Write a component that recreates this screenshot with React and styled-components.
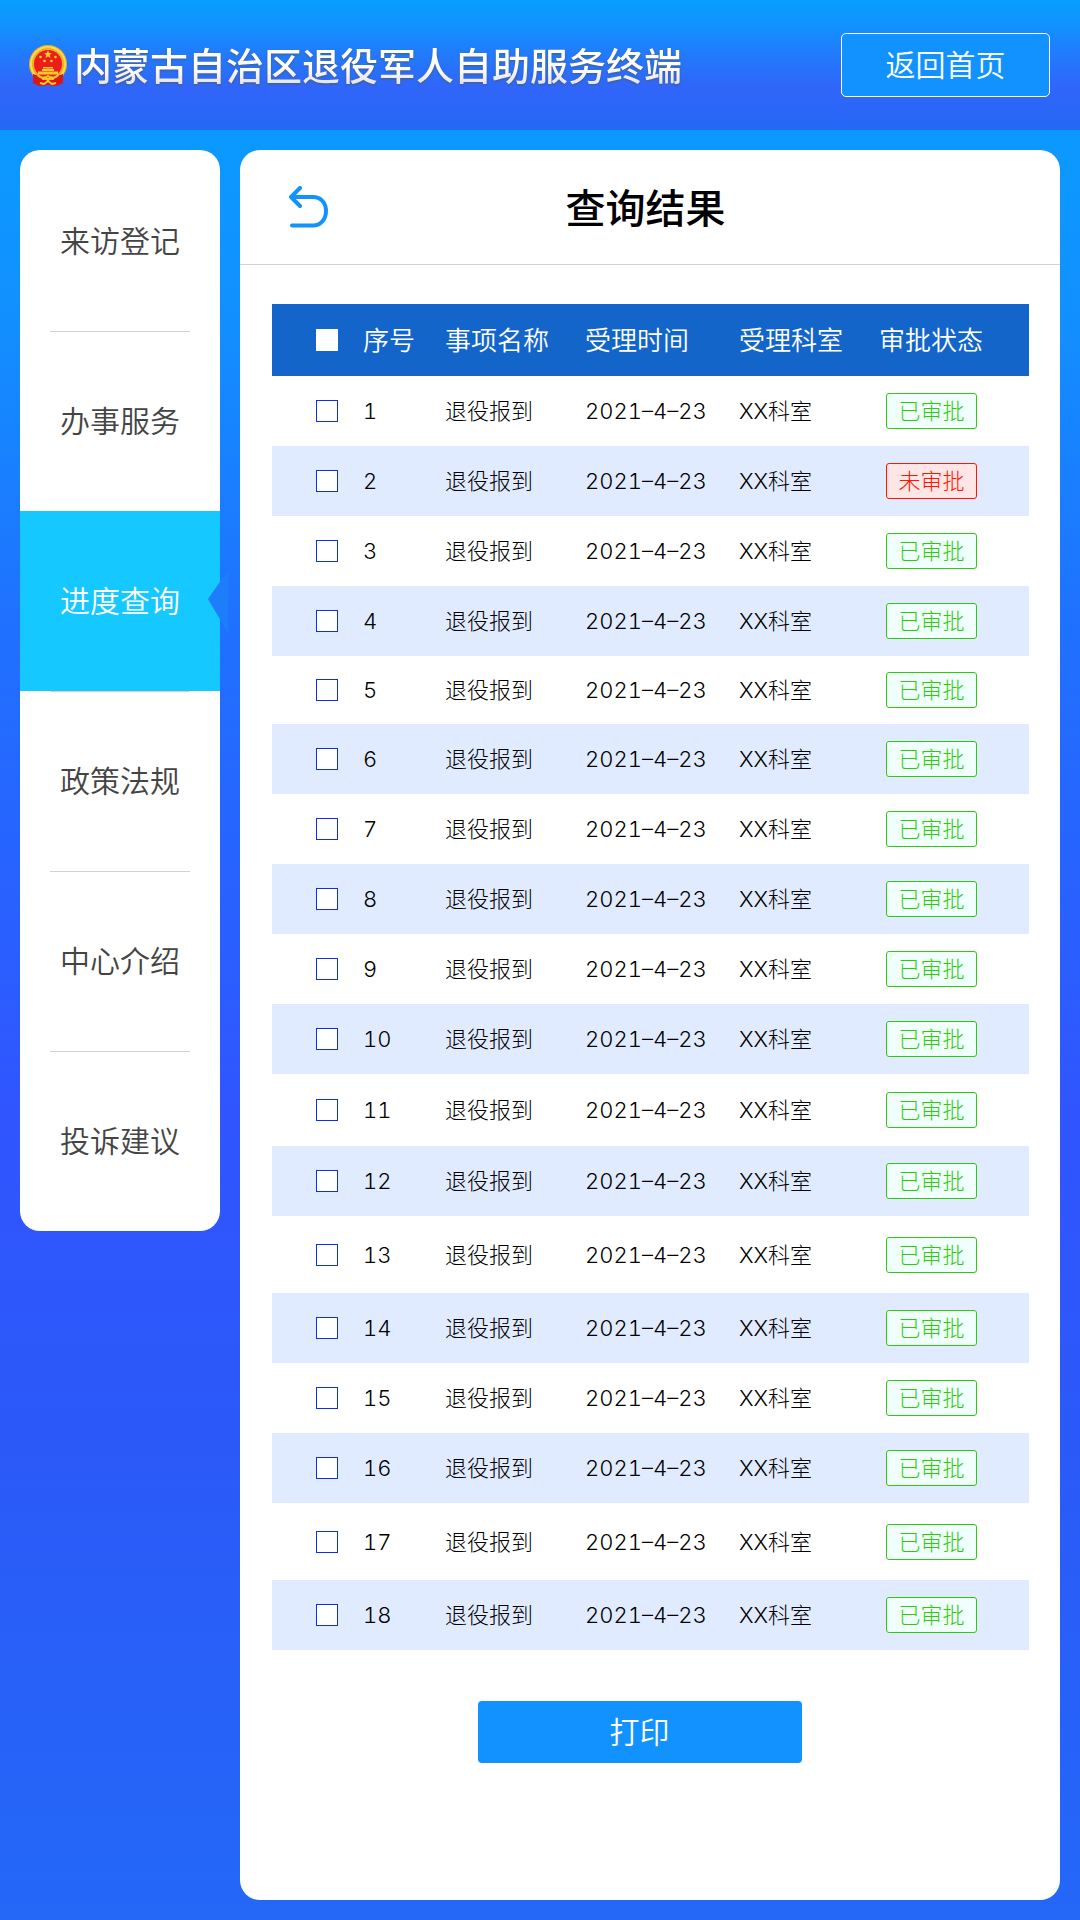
import React, { useState } from "react";
import styled, { createGlobalStyle } from "styled-components";

const MENUS = ["来访登记", "办事服务", "进度查询", "政策法规", "中心介绍", "投诉建议"];

const ROW_HEIGHTS = { 5: 68, 11: 72, 13: 77, 17: 77 };

const RECORDS = Array.from({ length: 18 }, (_, idx) => ({
  id: idx + 1,
  name: "退役报到",
  date: "2021–4–23",
  office: "XX科室",
  approved: idx !== 1,
}));

const Emblem = () => (
  <svg width="38" height="42" viewBox="0 0 38 42" aria-hidden="true">
    <circle cx="19" cy="19" r="19" fill="#f0ae22" />
    <circle cx="19" cy="19" r="17" fill="none" stroke="#ffd84d" strokeWidth="2" />
    <circle cx="19" cy="19" r="14" fill="#ea1f1c" />
    <path
      d="M19 5.500l1.100 2.600 2.800.2-2.100 1.800.6 2.800-2.400-1.500-2.400 1.500.6-2.800-2.100-1.800 2.800-.2z"
      fill="#ffce2e"
    />
    <g fill="#ffce2e">
      <circle cx="11.500" cy="12" r="1.300" />
      <circle cx="26.500" cy="12" r="1.300" />
      <circle cx="15.500" cy="16" r="1.300" />
      <circle cx="22.500" cy="16" r="1.300" />
      <path d="M14 22h10v1.500h-10z M13 24h12v2h-12z M9 26.500h20v3h-20z" />
    </g>
    <path d="M4 29 L13 32 L14 39 L10 41 L4 38 Z M34 29 L25 32 L24 39 L28 41 L34 38 Z" fill="#dc1712" />
    <path d="M10 35 H28 L26 41 L19 40 L12 41 Z" fill="#dc1712" />
    <path
      d="M8 29c3 4 7 5 11 2 4 3 8 2 11-2"
      fill="none"
      stroke="#f8c02c"
      strokeWidth="2"
    />
    <path
      d="M13 34c2-2 4-2 6 1 2-3 4-3 6-1M11 38l4 1 4-3 4 3 4-1"
      fill="none"
      stroke="#ffce2e"
      strokeWidth="2"
    />
  </svg>
);

const BackIcon = () => (
  <svg width="40" height="42" viewBox="0 0 40 42" aria-hidden="true">
    <path
      d="M11 2 L2 11 L11 20 M2 11 H24 C32 11 37 17 37 25 C37 33 32 39.500 24 39.500 H3"
      fill="none"
      stroke="#1192ff"
      strokeWidth="4"
      strokeLinecap="round"
      strokeLinejoin="round"
    />
  </svg>
);

const App = () => {
  const [menu, setMenu] = useState("进度查询");
  const [checked, setChecked] = useState([]);

  const toggle = (id) =>
    setChecked((prev) =>
      prev.includes(id) ? prev.filter((item) => item !== id) : [...prev, id]
    );

  const toggleAll = () =>
    setChecked((prev) =>
      prev.length === RECORDS.length ? [] : RECORDS.map((record) => record.id)
    );

  return (
    <Page>
      <GlobalStyle />
      <Header>
        <Brand>
          <Emblem />
          <h1>内蒙古自治区退役军人自助服务终端</h1>
        </Brand>
        <HomeButton type="button">返回首页</HomeButton>
      </Header>
      <Body>
        <Sidebar>
          <ul>
            {MENUS.map((name) => (
              <MenuItem key={name}>
                <MenuLink href="#" $active={name === menu} onClick={() => setMenu(name)}>
                  {name}
                </MenuLink>
                {name === menu && (
                  <Notch width="21" height="64" viewBox="0 0 21 64" aria-hidden="true">
                    <path d="M0 30 L21 0 L20 64 Z" fill="#1d7dfb" />
                  </Notch>
                )}
              </MenuItem>
            ))}
          </ul>
        </Sidebar>
        <Panel>
          <PanelHeader>
            <BackButton type="button" aria-label="返回">
              <BackIcon />
            </BackButton>
            <h2>查询结果</h2>
          </PanelHeader>
          <PanelBody>
            <Table>
              <colgroup>
                <Col $width={91} />
                <Col $width={82} />
                <Col $width={140} />
                <Col $width={154} />
                <Col $width={140} />
                <col />
              </colgroup>
              <thead>
                <tr>
                  <th>
                    <Checkbox
                      type="checkbox"
                      aria-label="全选"
                      $plain
                      checked={checked.length === RECORDS.length}
                      onChange={toggleAll}
                    />
                  </th>
                  <th>序号</th>
                  <th>事项名称</th>
                  <th>受理时间</th>
                  <th>受理科室</th>
                  <th>审批状态</th>
                </tr>
              </thead>
              <tbody>
                {RECORDS.map((record) => (
                  <Row key={record.id} $height={ROW_HEIGHTS[record.id]}>
                    <td>
                      <Checkbox
                        type="checkbox"
                        aria-label={`${record.id}`}
                        checked={checked.includes(record.id)}
                        onChange={() => toggle(record.id)}
                      />
                    </td>
                    <td>{record.id}</td>
                    <td>{record.name}</td>
                    <td>{record.date}</td>
                    <td>{record.office}</td>
                    <StatusCell>
                      <Status $approved={record.approved}>
                        {record.approved ? "已审批" : "未审批"}
                      </Status>
                    </StatusCell>
                  </Row>
                ))}
              </tbody>
            </Table>
            <PrintButton type="button">打印</PrintButton>
          </PanelBody>
        </Panel>
      </Body>
    </Page>
  );
};

const GlobalStyle = createGlobalStyle`
  * {
    box-sizing: border-box;
  }

  body {
    margin: 0;
    font-family: Inter, "Noto Sans CJK SC", sans-serif;
    color: #000;
  }

  h1, h2, ul {
    margin: 0;
    padding: 0;
  }

  button {
    font-family: inherit;
    cursor: pointer;
  }
`;

const Page = styled.div`
  display: flex;
  flex-direction: column;
  min-height: 100vh;
  background: linear-gradient(#069fff 0%, #1192ff 15%, #2070ff 33%, #3055ff 58%, #2b59f8 75%, #2468f8 100%);
`;

const Header = styled.header`
  display: flex;
  align-items: center;
  justify-content: space-between;
  height: 130px;
  padding: 0 30px 0 29px;
  background: linear-gradient(#069fff 0%, #1192ff 20%, #217cfb 40%, #3065f9 68%, #2468f6 100%);
`;

const Brand = styled.div`
  display: flex;
  align-items: center;
  gap: 7px;
  padding-top: 2px;

  h1 {
    font-size: 38px;
    line-height: 56px;
    font-weight: 500;
    color: #fff;
    white-space: nowrap;
    background: linear-gradient(#fff 50%, #e6e6e6 80%);
    background-clip: text;
    -webkit-text-fill-color: transparent;
    filter: drop-shadow(0 1px 1px rgba(90, 80, 80, 0.7));
  }
`;

const HomeButton = styled.button`
  width: 209px;
  height: 64px;
  border: 1px solid #fff;
  border-radius: 5px;
  background: #1192ff;
  color: #fff;
  font-size: 30px;
  line-height: 40px;
  font-weight: 350;
`;

const Body = styled.div`
  display: flex;
  flex: 1;
  align-items: flex-start;
  gap: 20px;
  padding: 20px;
`;

const Sidebar = styled.nav`
  flex: 0 0 200px;
  padding-top: 1px;
  border-radius: 20px;
  background: #fff;

  ul {
    list-style: none;
  }
`;

const MenuItem = styled.li`
  position: relative;

  & + &::before {
    content: "";
    position: absolute;
    top: 0;
    left: 30px;
    right: 30px;
    height: 1px;
    background: #d2d2d2;
  }
`;

const MenuLink = styled.a`
  position: relative;
  display: flex;
  align-items: center;
  justify-content: center;
  height: 180px;
  font-size: 30px;
  line-height: 40px;
  font-weight: 350;
  text-decoration: none;
  color: ${(props) => (props.$active ? "#fff" : "#444")};
  background: ${(props) => (props.$active ? "#15c8ff" : "none")};
`;

const Notch = styled.svg`
  position: absolute;
  top: 58px;
  right: -9px;
`;

const Panel = styled.main`
  display: flex;
  flex-direction: column;
  align-self: stretch;
  flex: 1;
  border-radius: 20px;
  background: #fff;
`;

const PanelHeader = styled.div`
  display: grid;
  grid-template-columns: 1fr auto 1fr;
  align-items: center;
  height: 115px;
  padding: 0 58px 0 49px;
  border-bottom: 1px solid #d2d2d2;

  h2 {
    padding-top: 4px;
    font-size: 40px;
    line-height: 60px;
    font-weight: 500;
  }
`;

const BackButton = styled.button`
  display: flex;
  justify-self: start;
  padding: 0;
  border: none;
  background: none;
`;

const PanelBody = styled.div`
  display: flex;
  flex-direction: column;
  align-items: center;
  padding: 39px 31px 51px 32px;
`;

const Table = styled.table`
  width: 100%;
  table-layout: fixed;
  border-collapse: collapse;
  font-size: 22px;
  line-height: 32px;
  font-weight: 300;
  font-variant-numeric: tabular-nums;
  text-align: left;

  th,
  td {
    padding: 0;
    white-space: nowrap;
    vertical-align: middle;
  }

  th {
    height: 72px;
    padding-top: 2px;
    background: #1365ca;
    color: #fff;
    font-size: 26px;
    font-weight: 350;
  }

  th:first-child,
  td:first-child {
    padding: 0 0 0 44px;
  }
`;

const Col = styled.col`
  width: ${(props) => props.$width}px;
`;

const Row = styled.tr`
  height: ${(props) => props.$height || 70}px;

  &:nth-child(even) {
    background: #e0ebff;
  }
`;

const StatusCell = styled.td`
  && {
    padding-left: 7px;
  }
`;

const Checkbox = styled.input`
  appearance: none;
  display: block;
  width: 22px;
  height: 22px;
  margin: 0;
  border: 1px solid ${(props) => (props.$plain ? "#fff" : "#0f2fe6")};
  background: #fff;
  cursor: pointer;

  &:checked {
    background: #1192ff;
  }
`;

const Status = styled.span`
  display: flex;
  align-items: center;
  justify-content: center;
  width: 91px;
  height: 36px;
  border: 1px solid;
  border-radius: 3px;
  color: ${(props) => (props.$approved ? "#2fc90d" : "#ff1500")};
  background: ${(props) => (props.$approved ? "#f0fffb" : "#ffe6e6")};
`;

const PrintButton = styled.button`
  width: 324px;
  height: 62px;
  margin: 51px 22px 0 0;
  border: none;
  border-radius: 4px;
  background: #1192ff;
  color: #fff;
  font-size: 30px;
  line-height: 40px;
  font-weight: 350;
`;

export default App;
